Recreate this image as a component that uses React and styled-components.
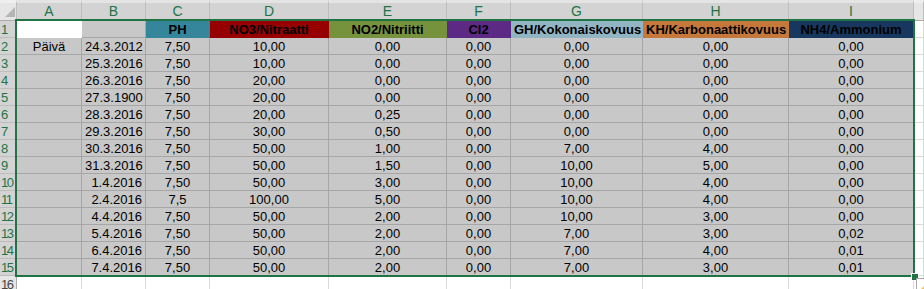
import React from 'react'
import styled, { createGlobalStyle } from 'styled-components'

const GlobalStyle = createGlobalStyle`
  body {
    margin: 0;
    background: #ffffff;
    overflow: hidden;
  }
`

const GREEN = '#217346'
const GRAY = '#c8c8c8'
const GRAY_LINE = '#a6a6a6'

const letters = ['A', 'B', 'C', 'D', 'E', 'F', 'G', 'H', 'I']

const titles = [
  { text: '', bg: '#ffffff', line: '#ffffff' },
  { text: '', bg: GRAY, line: GRAY_LINE },
  { text: 'PH', bg: '#36869b' },
  { text: 'NO3/Nitraatti', bg: '#970000' },
  { text: 'NO2/Nitriitti', bg: '#77923d' },
  { text: 'Cl2', bg: '#5c2a85' },
  { text: 'GH/Kokonaiskovuus', bg: '#92b5c3' },
  { text: 'KH/Karbonaattikovuus', bg: '#c57839' },
  { text: 'NH4/Ammonium', bg: '#17375e' },
]

const data = [
  ['Päivä', '24.3.2012', '7,50', '10,00', '0,00', '0,00', '0,00', '0,00', '0,00'],
  ['', '25.3.2016', '7,50', '10,00', '0,00', '0,00', '0,00', '0,00', '0,00'],
  ['', '26.3.2016', '7,50', '20,00', '0,00', '0,00', '0,00', '0,00', '0,00'],
  ['', '27.3.1900', '7,50', '20,00', '0,00', '0,00', '0,00', '0,00', '0,00'],
  ['', '28.3.2016', '7,50', '20,00', '0,25', '0,00', '0,00', '0,00', '0,00'],
  ['', '29.3.2016', '7,50', '30,00', '0,50', '0,00', '0,00', '0,00', '0,00'],
  ['', '30.3.2016', '7,50', '50,00', '1,00', '0,00', '7,00', '4,00', '0,00'],
  ['', '31.3.2016', '7,50', '50,00', '1,50', '0,00', '10,00', '5,00', '0,00'],
  ['', '1.4.2016', '7,50', '50,00', '3,00', '0,00', '10,00', '4,00', '0,00'],
  ['', '2.4.2016', '7,5', '100,00', '5,00', '0,00', '10,00', '4,00', '0,00'],
  ['', '4.4.2016', '7,50', '50,00', '2,00', '0,00', '10,00', '3,00', '0,00'],
  ['', '5.4.2016', '7,50', '50,00', '2,00', '0,00', '7,00', '3,00', '0,02'],
  ['', '6.4.2016', '7,50', '50,00', '2,00', '0,00', '7,00', '4,00', '0,01'],
  ['', '7.4.2016', '7,50', '50,00', '2,00', '0,00', '7,00', '3,00', '0,01'],
]

function App() {
  return (
    <>
      <GlobalStyle />
      <Sheet>
        <Corner>
          <svg width="16" height="20" viewBox="0 0 16 20">
            <polygon points="5,17 15,17 15,7" fill="#b5b5b5" />
          </svg>
        </Corner>
        {letters.map((l) => (
          <ColHeader key={l} $selected>{l}</ColHeader>
        ))}
        <ColHeader />

        <RowHeader $selected>1</RowHeader>
        {titles.map((t, i) => (
          <Cell key={i} $bg={t.bg} $line={t.line || t.bg} $bold>
            {t.text}
          </Cell>
        ))}
        <Blank />

        {data.map((row, r) => (
          <React.Fragment key={r}>
            <RowHeader $selected>{r + 2}</RowHeader>
            {row.map((v, c) => (
              <Cell key={c} $bg={GRAY} $line={GRAY_LINE} $align={c === 1 ? 'right' : 'center'}>
                {v}
              </Cell>
            ))}
            <Blank />
          </React.Fragment>
        ))}

        <RowHeader>16</RowHeader>
        {letters.map((l) => (
          <Blank key={l} />
        ))}
        <Blank />

        <Selection>
          <FillHandle />
        </Selection>
        <QuickAnalysis>
          <svg width="16" height="16" viewBox="0 0 16 16">
            <rect x="0.5" y="0.5" width="15" height="15" fill="#ffffff" stroke="#a8a8a8" />
            <polygon points="3,13 13,13 13,3" fill="#f2c46d" />
            <rect x="9" y="8" width="2" height="5" fill="#e48a2a" />
          </svg>
        </QuickAnalysis>
      </Sheet>
    </>
  )
}

const Sheet = styled.div`
  position: relative;
  display: grid;
  grid-template-columns: 17px 65px 64px 64px 119px 118px 64px 132px 146px 125px 1fr;
  grid-template-rows: 21px;
  grid-auto-rows: 17px;
  font-family: "Liberation Sans", Arial, sans-serif;
`

const Corner = styled.div`
  box-sizing: border-box;
  background: #e6e6e6;
  border-top: 3px solid #efefef;
  border-right: 1px solid #bdbdbd;
  border-bottom: 1px solid #ababab;
  overflow: hidden;

  svg {
    display: block;
    margin-top: -3px;
  }
`

const ColHeader = styled.div`
  box-sizing: border-box;
  background: ${(p) => (p.$selected ? '#d3d3d3' : '#e6e6e6')};
  color: ${(p) => (p.$selected ? GREEN : '#444444')};
  border-top: 3px solid ${(p) => (p.$selected ? '#e4e4e4' : '#efefef')};
  border-right: 1px solid #bdbdbd;
  border-bottom: 1px solid #ababab;
  font-size: 14px;
  line-height: 17px;
  text-align: center;
`

const RowHeader = styled.div`
  box-sizing: border-box;
  background: ${(p) => (p.$selected ? '#d3d3d3' : '#e6e6e6')};
  color: ${(p) => (p.$selected ? GREEN : '#444444')};
  border-right: 1px solid ${(p) => (p.$selected ? GREEN : '#ababab')};
  border-bottom: 1px solid #bdbdbd;
  font-size: 13px;
  letter-spacing: -1.5px;
  line-height: 17px;
  padding-left: 1px;
  overflow: hidden;
  white-space: nowrap;
`

const Cell = styled.div`
  box-sizing: border-box;
  background: ${(p) => p.$bg};
  border-right: 1px solid ${(p) => p.$line};
  border-bottom: 1px solid ${(p) => p.$line};
  color: #000000;
  font-size: 13px;
  font-weight: ${(p) => (p.$bold ? 700 : 400)};
  line-height: 15px;
  padding: 1px 3px 0;
  text-align: ${(p) => p.$align || 'center'};
  white-space: nowrap;
  overflow: hidden;
`

const Blank = styled.div`
  box-sizing: border-box;
  background: #ffffff;
  border-right: 1px solid #d9d9d9;
  border-bottom: 1px solid #d9d9d9;
`

const Selection = styled.div`
  position: absolute;
  left: 15px;
  top: 19px;
  width: 900px;
  height: 258px;
  box-sizing: border-box;
  border: 2px solid ${GREEN};
  pointer-events: none;
`

const FillHandle = styled.div`
  position: absolute;
  right: -6px;
  bottom: -6px;
  width: 6px;
  height: 6px;
  background: ${GREEN};
  border: 1px solid #ffffff;
`

const QuickAnalysis = styled.div`
  position: absolute;
  left: 916px;
  top: 278px;
  width: 16px;
  height: 16px;

  svg {
    display: block;
  }
`

export default App
